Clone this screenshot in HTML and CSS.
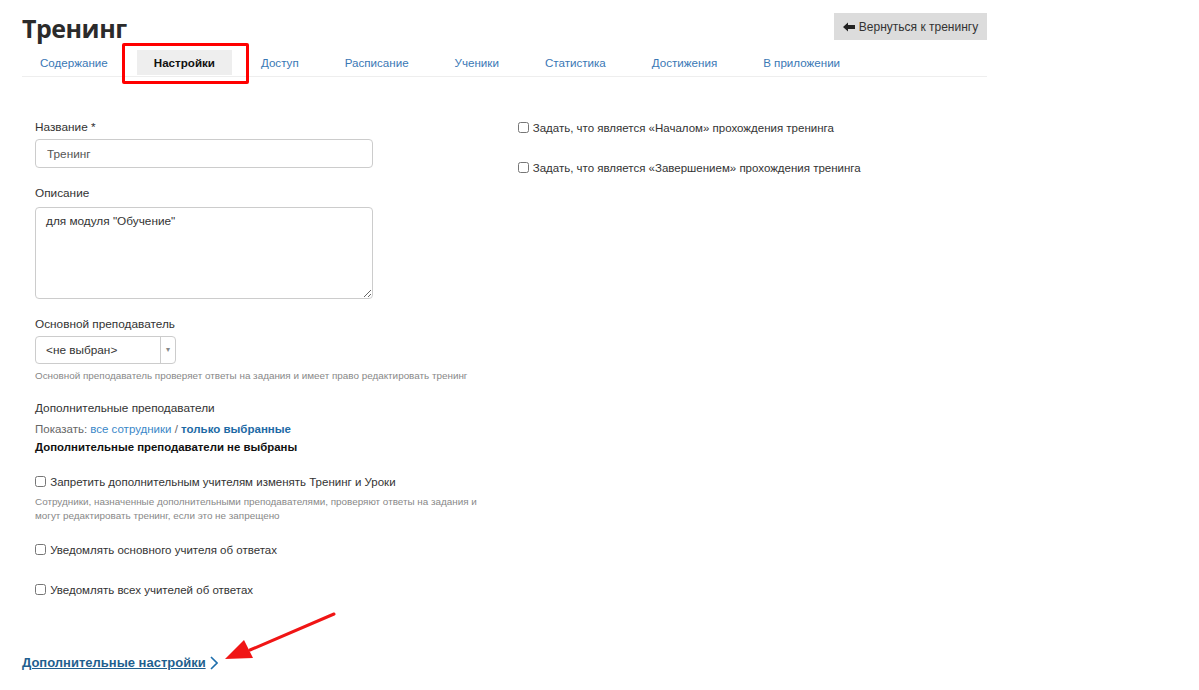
FILE: index.html
```html
<!DOCTYPE html>
<html lang="ru">
  <head>
    <meta charset="UTF-8" />
    <title>Тренинг — Настройки</title>
    <link rel="stylesheet" href="styles.css">
  </head>
  <body>
    <div class="page">
      <div class="header">
        <h1>Тренинг</h1>
        <button class="back-btn">
          <svg class="back-icon" viewBox="0 0 12 10" width="12" height="10">
            <path d="M0 5 L5 0.5 L5 3 L12 3 L12 7 L5 7 L5 9.5 Z" fill="#222" />
          </svg>
          Вернуться к тренингу
        </button>
      </div>

      <ul class="tabs">
        <li class="tab"><a href="#">Содержание</a></li>
        <li class="tab active highlighted"><a href="#">Настройки</a></li>
        <li class="tab"><a href="#">Доступ</a></li>
        <li class="tab"><a href="#">Расписание</a></li>
        <li class="tab"><a href="#">Ученики</a></li>
        <li class="tab"><a href="#">Статистика</a></li>
        <li class="tab"><a href="#">Достижения</a></li>
        <li class="tab"><a href="#">В приложении</a></li>
      </ul>

      <div class="form-row">
        <div class="col">
          <div class="field">
            <label class="field-label">Название *</label>
            <input class="text-input" type="text" value="Тренинг" />
          </div>

          <div class="field">
            <label class="field-label">Описание</label>
            <textarea class="text-area">для модуля "Обучение"</textarea>
          </div>

          <div class="field">
            <label class="field-label">Основной преподаватель</label>
            <div class="select">
              <span class="select-value">&lt;не выбран&gt;</span>
              <span class="select-arrow">&#9662;</span>
            </div>
            <div class="hint">Основной преподаватель проверяет ответы на задания и имеет право редактировать тренинг</div>
          </div>

          <div class="field">
            <div class="field-label">Дополнительные преподаватели</div>
            <div class="show-line">
              Показать: <a href="#" class="link">все сотрудники</a> / <a href="#" class="link strong">только выбранные</a>
            </div>
            <div class="none-selected">Дополнительные преподаватели не выбраны</div>
          </div>

          <div class="check with-hint">
            <label><input type="checkbox" /> Запретить дополнительным учителям изменять Тренинг и Уроки</label>
            <div class="hint">Сотрудники, назначенные дополнительными преподавателями, проверяют ответы на задания и могут редактировать тренинг, если это не запрещено</div>
          </div>

          <div class="check">
            <label><input type="checkbox" /> Уведомлять основного учителя об ответах</label>
          </div>

          <div class="check">
            <label><input type="checkbox" /> Уведомлять всех учителей об ответах</label>
          </div>
        </div>

        <div class="col">
          <div class="check">
            <label><input type="checkbox" /> Задать, что является «Началом» прохождения тренинга</label>
          </div>
          <div class="check">
            <label><input type="checkbox" /> Задать, что является «Завершением» прохождения тренинга</label>
          </div>
        </div>
      </div>

      <div class="more">
        <a href="#" class="more-link">Дополнительные настройки</a>
        <svg class="chevron" viewBox="0 0 8 14" width="8" height="14">
          <path d="M1 1 L7 7 L1 13" fill="none" stroke="#1f6fad" stroke-width="1.6" />
        </svg>
      </div>
    </div>

    <svg class="annotation" viewBox="0 0 120 60" width="120" height="60">
      <line x1="114" y1="6" x2="30" y2="42" stroke="#f01515" stroke-width="3" stroke-linecap="round" />
      <path d="M5 51 L24 32 L33 50 Z" fill="#f01515" />
    </svg>
  </body>
</html>
```

FILE: styles.css
```css
body {
  margin: 0;
  font-family: "Liberation Sans", Arial, sans-serif;
  color: #333;
  background: #fff;
  position: relative;
}

.page {
  width: 965px;
  margin-left: 22px;
}

.header {
  display: flex;
  justify-content: space-between;
  align-items: flex-start;
  height: 50px;
}

h1 {
  margin: 12px 0 0;
  font-family: "Open Sans", sans-serif;
  font-size: 25px;
  font-weight: 700;
  line-height: 32px;
  color: #2b2b2b;
  letter-spacing: -0.5px;
}

.back-btn {
  margin-top: 13px;
  height: 27px;
  width: 153px;
  padding: 0 8px;
  border: none;
  background: #dcdcdc;
  color: #333;
  font-family: "Liberation Sans", Arial, sans-serif;
  font-size: 12px;
  white-space: nowrap;
  display: flex;
  align-items: center;
  justify-content: center;
  gap: 4px;
}

.tabs {
  display: flex;
  list-style: none;
  margin: 0;
  padding: 0 0 0 1px;
  border-bottom: 1px solid #eee;
  height: 26px;
}

.tab {
  margin-right: 12px;
  position: relative;
}

.tab a {
  display: block;
  height: 25px;
  line-height: 25px;
  padding: 0 17px;
  font-size: 11.6px;
  color: #3a78b5;
  text-decoration: none;
}

.tab.active a {
  background: #eee;
  color: #111;
  font-weight: 700;
}

.tab.highlighted::after {
  content: "";
  position: absolute;
  top: -7px;
  left: -15px;
  right: -17px;
  bottom: -8px;
  border: 3px solid #f00;
  border-radius: 2px;
}

.form-row {
  display: flex;
  padding-top: 41px;
}

.col {
  flex: 1;
  padding: 0 13px;
}

.field {
  margin-bottom: 16px;
}

.field-label {
  display: block;
  font-size: 11.8px;
  line-height: 18px;
  margin-bottom: 3px;
  color: #333;
}

.text-input,
.text-area {
  display: block;
  box-sizing: border-box;
  width: 338px;
  border: 1px solid #ccc;
  border-radius: 4px;
  font-family: "Liberation Sans", Arial, sans-serif;
  font-size: 11.8px;
  color: #555;
}

.text-input {
  height: 29px;
  padding: 0 11px;
}

.text-area {
  height: 92px;
  padding: 6px 10px;
  margin-top: 5px;
  resize: vertical;
  color: #333;
}

.select {
  display: flex;
  box-sizing: border-box;
  width: 141px;
  height: 28px;
  border: 1px solid #ccc;
  border-radius: 4px;
  margin-top: 3px;
  font-size: 11.8px;
}

.select-value {
  flex: 1;
  line-height: 26px;
  padding-left: 10px;
  border-right: 1px solid #ccc;
}

.select-arrow {
  width: 14px;
  line-height: 26px;
  text-align: center;
  font-size: 8px;
  color: #888;
}

.hint {
  font-size: 9.9px;
  line-height: 14px;
  color: #888;
  margin-top: 5px;
}

.show-line {
  font-size: 11.5px;
  line-height: 18px;
  color: #666;
  margin-top: 2px;
}

.link {
  color: #3a87c8;
  text-decoration: none;
}

.link.strong {
  color: #1d6aa5;
  font-weight: 700;
}

.none-selected {
  font-size: 11.4px;
  font-weight: 700;
  line-height: 18px;
  color: #111;
}

.check {
  margin-bottom: 21px;
}

.check.with-hint {
  margin-top: 8px;
  margin-bottom: 17px;
}

.check label {
  font-size: 11.5px;
  line-height: 18px;
  color: #333;
}

.check input {
  margin: 0 1px 0 0;
  width: 11px;
  height: 11px;
  vertical-align: -1px;
}

.check .hint {
  margin-top: 4px;
}

.more {
  display: flex;
  align-items: center;
  gap: 4px;
  margin-top: 35px;
}

.more-link {
  font-size: 13px;
  font-weight: 700;
  color: #1f5f8f;
}

.annotation {
  position: absolute;
  left: 220px;
  top: 608px;
}
```
